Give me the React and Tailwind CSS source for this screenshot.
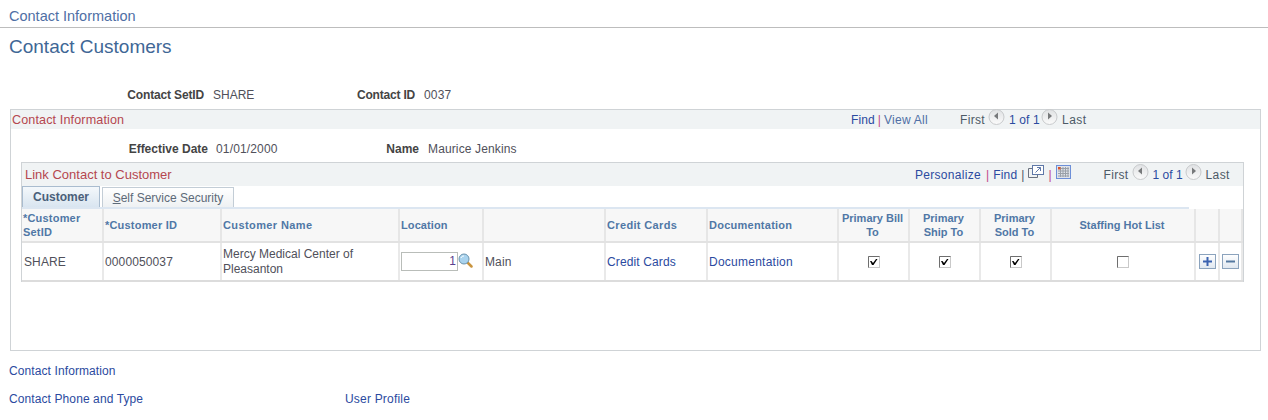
import React from 'react';

const link = 'text-[#2b4aa0]';
const sep = 'text-[#c0458a]';

const NavButton = ({ dir }) => (
  <svg width="17" height="17" viewBox="0 0 17 17" className="shrink-0">
    <defs>
      <linearGradient id={`nav-${dir}`} x1="0" y1="0" x2="0" y2="1">
        <stop offset="0" stopColor="#dfe1e3" />
        <stop offset="1" stopColor="#fbfbfb" />
      </linearGradient>
    </defs>
    <circle cx="8.5" cy="8" r="7.5" fill={`url(#nav-${dir})`} stroke="#c8cacc" />
    {dir === 'left' ? (
      <path d="M10 3.500v7L6 7z" fill="#77797b" />
    ) : (
      <path d="M7 3.500v7L11 7z" fill="#77797b" />
    )}
  </svg>
);

const Pager = () => (
  <div className="flex items-center text-[#4d5a66]">
    <span className="w-[28px] tracking-[0.3px]">First</span>
    <span className="mr-[4px] -mt-[5px]"><NavButton dir="left" /></span>
    <span className={`${link} w-[32px]`}>1 of 1</span>
    <span className="mr-[4px] -mt-[5px]"><NavButton dir="right" /></span>
    <span className="tracking-[0.4px]">Last</span>
  </div>
);

const NewWindowIcon = () => (
  <svg width="16" height="14" viewBox="0 0 16 14" className="shrink-0">
    <path d="M4.500 3.500h-4v9h9v-3" fill="none" stroke="#6b7280" />
    <rect x="4.500" y="0.500" width="11" height="9" fill="#fff" stroke="#5f78a8" />
    <path d="M7.500 7.500l5-5M9 2.500h3.500v3.500" fill="none" stroke="#5f78a8" />
  </svg>
);

const GridIcon = () => (
  <svg width="15" height="14" viewBox="0 0 15 14" className="shrink-0">
    <rect x="0.500" y="0.500" width="14" height="13" fill="#dfe3ea" stroke="#6d8fd8" />
    <path d="M2 3.500h11M2 6h11M2 8.500h11M2 11h11M4.500 2v10M7 2v10M9.500 2v10M12 2v10" stroke="#9aa0a8" strokeWidth="1" />
    <rect x="2" y="2" width="2.500" height="2.500" fill="#d9542b" />
  </svg>
);

const SearchIcon = () => (
  <svg width="15" height="16" viewBox="0 0 15 16" className="shrink-0 -mt-[1px]">
    <path d="M9.500 9.500l4 4" stroke="#c9943f" strokeWidth="2.500" strokeLinecap="round" />
    <circle cx="6" cy="6" r="5" fill="#a9d3ee" stroke="#6b93ad" />
    <path d="M3 5c.5-1.500 1.500-2 3-2" stroke="#fff" fill="none" />
  </svg>
);

const Checkbox = ({ checked }) => (
  <svg width="12" height="12" viewBox="0 0 12 12">
    <rect x="0.500" y="0.500" width="11" height="11" fill="#fff" stroke="#c9c9c9" />
    <path d="M0.500 11.500v-11h11" fill="none" stroke="#6e6e6e" />
    {checked && <path d="M2 5l1.500 0 1.500 2 3-4h1.500l-4 6h-1.500z" fill="#000" />}
  </svg>
);

const RowButton = ({ minus }) => (
  <svg width="17" height="15" viewBox="0 0 17 15">
    <defs>
      <linearGradient id={minus ? 'btn-m' : 'btn-p'} x1="0" y1="0" x2="0" y2="1">
        <stop offset="0" stopColor="#ffffff" />
        <stop offset="1" stopColor="#dfe7f0" />
      </linearGradient>
    </defs>
    <rect x="0.500" y="0.500" width="16" height="14" fill={`url(#${minus ? 'btn-m' : 'btn-p'})`} stroke="#8ba3bd" />
    <path d="M4 7.500h9" stroke={minus ? '#5478a0' : '#3a62b0'} strokeWidth="2" />
    {!minus && <path d="M8.500 3v9" stroke="#3a62b0" strokeWidth="2" />}
  </svg>
);

const columns = 'grid grid-cols-[82px_118px_178px_84px_122px_102px_131px_71px_71px_71px_144px_24px_23px]';
const headCell = 'flex items-center bg-[#f7f7f7] border-r-2 border-[#e6e6e6] text-[11px] leading-[14px] font-bold text-[#5077a6] px-[1px]';
const bodyCell = 'flex items-center border-r-2 border-[#e9e9e9] px-[1px] tracking-[0.12px]';
const plain = 'text-[#50505a]';
const label = 'text-right font-bold text-[#444444]';

const headers = [
  { label: <>*Customer<br />SetID</>, track: 'tracking-[0.2px]' },
  { label: '*Customer ID', track: 'tracking-[0.2px]' },
  { label: 'Customer Name', track: 'tracking-[0.4px]' },
  { label: 'Location', track: 'tracking-[0.1px]' },
  { label: '' },
  { label: 'Credit Cards', track: 'tracking-[0.35px]' },
  { label: 'Documentation', track: 'tracking-[0.25px]' },
  { label: <>Primary Bill<br />To</>, center: true },
  { label: <>Primary<br />Ship To</>, center: true },
  { label: <>Primary<br />Sold To</>, center: true },
  { label: 'Staffing Hot List', center: true },
  { label: '' },
  { label: '' },
];

const App = () => {
  return (
    <div className="w-[1268px] h-[420px] overflow-hidden bg-white text-[12px] leading-[14px] font-['Liberation_Sans',Arial,sans-serif]">
      <div className="h-[28px] pl-[9px] pt-[8px] border-b border-[#bdbdbd] text-[14.5px] leading-[16px] text-[#4f6fa5]">
        Contact Information
      </div>

      <h1 className="pl-[9px] pt-[8px] text-[19px] leading-[21px] text-[#3f6796]">Contact Customers</h1>

      <div className="flex mt-[31px]">
        <span className={`w-[204px] ${label} tracking-[-0.15px]`}>Contact SetID</span>
        <span className={`w-[153px] pl-[9px] ${plain}`}>SHARE</span>
        <span className={`w-[58px] ${label} whitespace-nowrap tracking-[-0.2px]`}>Contact ID</span>
        <span className={`pl-[9px] tracking-[0.2px] ${plain}`}>0037</span>
      </div>

      <div className="ml-[10px] mt-[7px] w-[1251px] h-[242px] border border-[#cfd3d6]">
        <div className="h-[19px] bg-[#f0f3f4] flex items-center pl-[1px] tracking-[0.12px]">
          <span className="text-[#b5474f] text-[12.6px] w-[839px]">Contact Information</span>
          <span className={link}>Find</span>
          <span className={`${sep} mx-[3px]`}>|</span>
          <span className="text-[#4f6fa5] w-[76px] tracking-[0.25px]">View All</span>
          <Pager />
        </div>

        <div className={`flex mt-[13px] ${plain}`}>
          <span className={`w-[197px] ${label}`}>Effective Date</span>
          <span className="w-[161px] pl-[8px] tracking-[0.15px]">01/01/2000</span>
          <span className={`w-[50px] ${label}`}>Name</span>
          <span className="pl-[9px] tracking-[0.13px]">Maurice Jenkins</span>
        </div>

        <div className="ml-[10px] mt-[6px] w-[1223px] border-t border-l border-r border-[#cfd3d6]">
          <div className="h-[23px] bg-[#f0f3f4] flex items-center pl-[3px]">
            <span className="text-[#b5474f] text-[13px] w-[890px]">Link Contact to Customer</span>
            <span className={`${link} tracking-[0.3px]`}>Personalize</span>
            <span className={`${sep} ml-[5px] mr-[4px]`}>|</span>
            <span className={`${link} tracking-[0.2px]`}>Find</span>
            <span className="ml-[4px] mr-[4px] text-[#4d5a66]">|</span>
            <span className="-mt-[6px]"><NewWindowIcon /></span>
            <span className={`${sep} mx-[4px]`}>|</span>
            <span className="-mt-[6px]"><GridIcon /></span>
            <span className="ml-[33px]"><Pager /></span>
          </div>

          <div className="flex h-[23px] w-[1167px] border-b-2 border-[#dce6f1]">
            <div className="w-[78px] h-[21px] border border-b-0 border-[#a9bccf] bg-gradient-to-b from-[#f4f8fb] to-[#d9e5f0] flex items-center justify-center font-bold text-[#4a5f7a] text-[12px]">
              Customer
            </div>
            <div className="ml-[2px] mt-[1px] w-[132px] h-[20px] border border-b-0 border-[#c3cdd6] bg-gradient-to-b from-white to-[#eef1f3] flex items-center justify-center text-[#5d6a78]">
              <span><span className="underline">S</span>elf Service Security</span>
            </div>
          </div>

          <div className="border-b-2 border-[#dcdcdc]">
            <div className={`${columns} h-[34px] border-b-2 border-[#e2e2e2]`}>
              {headers.map((h, i) => (
                <div key={i} className={`${headCell} ${h.center ? 'justify-center text-center pr-[3px]' : ''} ${h.track || ''} ${i === headers.length - 1 ? 'border-r-0' : ''}`}>
                  <span>{h.label}</span>
                </div>
              ))}
            </div>
            <div className={`${columns} h-[37px]`}>
              <div className={`${bodyCell} ${plain} pl-[2px]`}>SHARE</div>
              <div className={`${bodyCell} ${plain}`}>0000050037</div>
              <div className={`${bodyCell} ${plain} tracking-normal`}><span className="leading-[15px]">Mercy Medical Center of<br />Pleasanton</span></div>
              <div className={`${bodyCell} ${plain}`}>
                <div className="w-[57px] h-[19px] border border-[#b9bdb9] bg-white text-right pr-[1px] leading-[17px] text-[#5a3f8f]">1</div>
                <SearchIcon />
              </div>
              <div className={`${bodyCell} ${plain}`}>Main</div>
              <div className={`${bodyCell} ${link}`}>Credit Cards</div>
              <div className={`${bodyCell} ${link} tracking-[0.25px]`}>Documentation</div>
              <div className={`${bodyCell} justify-center`}><Checkbox checked /></div>
              <div className={`${bodyCell} justify-center`}><Checkbox checked /></div>
              <div className={`${bodyCell} justify-center`}><Checkbox checked /></div>
              <div className={`${bodyCell} justify-center`}><Checkbox /></div>
              <div className={`${bodyCell} justify-center`}><RowButton /></div>
              <div className={`${bodyCell} justify-center border-r-0`}><RowButton minus /></div>
            </div>
          </div>
        </div>
      </div>

      <div className={`pl-[9px] mt-[13px] tracking-[0.1px] ${link}`}>Contact Information</div>
      <div className={`flex pl-[9px] mt-[14px] tracking-[0.1px] ${link}`}>
        <span className="w-[336px]">Contact Phone and Type</span>
        <span className="tracking-[0.2px]">User Profile</span>
      </div>
    </div>
  );
};

export default App;
